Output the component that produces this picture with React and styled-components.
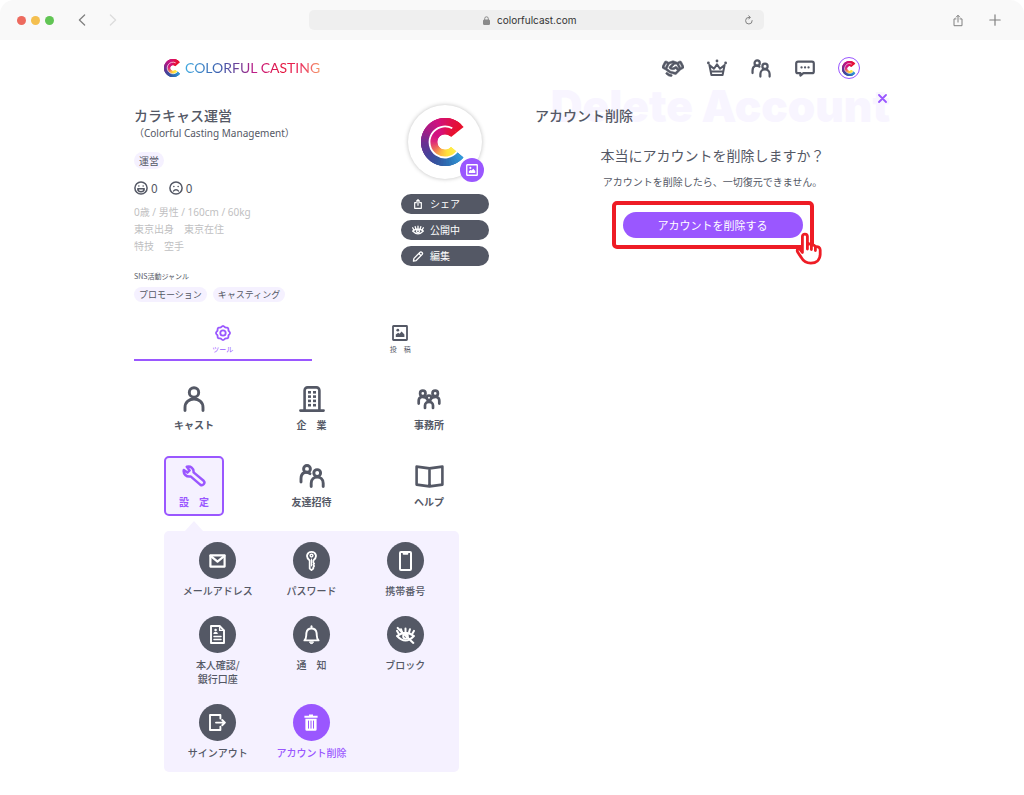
import React, { useState } from 'react';
import styled, { createGlobalStyle } from 'styled-components';
import { PiHandshakeBold } from 'react-icons/pi';

const INK = '#545865';
const PURPLE = '#9a57ff';
const PALE = '#f5f1ff';

const GlobalStyle = createGlobalStyle`
  * {
    box-sizing: border-box;
  }

  body {
    margin: 0;
    background: #fff;
    color: ${INK};
    font-family: 'Noto Sans CJK JP', sans-serif;
    font-size: 10px;
  }

  h1, h2, p, ul, li {
    margin: 0;
    padding: 0;
  }

  svg {
    display: block;
    flex-shrink: 0;
  }

  button, input {
    font-family: inherit;
    margin: 0;
    padding: 0;
    border: 0;
    background: none;
    color: inherit;
  }

  button {
    cursor: pointer;
  }

  a {
    color: inherit;
    text-decoration: none;
  }
`;

/* ---------- browser bar ---------- */

const BrowserBar = styled.div`
  display: flex;
  align-items: center;
  height: 40px;
  background: #f9f9f9;
  border-radius: 14px 14px 0 0;
`;

const BarLeft = styled.div`
  display: flex;
  align-items: center;
  flex: 0 0 309px;
  padding-left: 17px;
`;

const Lights = styled.div`
  display: flex;
  gap: 5px;
  margin-right: 18px;
`;

const Light = styled.span`
  width: 9px;
  height: 9px;
  border-radius: 50%;
  background: ${props => props.$color};
`;

const BarButton = styled.button`
  display: flex;
  align-items: center;
  justify-content: center;
  width: 20px;
  height: 20px;
  color: ${props => (props.$faint ? '#dcdcdc' : '#808080')};
`;

const ArrowButtons = styled.div`
  display: flex;
  gap: 11px;
`;

const AddressBar = styled.div`
  display: flex;
  align-items: center;
  flex: 1;
  height: 20px;
  padding-right: 5px;
  padding-left: 16px;
  border-radius: 5px;
  background: #efefef;
`;

const Address = styled.div`
  display: flex;
  align-items: center;
  justify-content: center;
  flex: 1;
  gap: 7px;
  color: #8a8a8a;

  input {
    width: 84px;
    height: 16px;
    color: #333;
    font-family: Inter, sans-serif;
    font-size: 10px;
    outline: none;
  }
`;

const BarRight = styled.div`
  display: flex;
  align-items: center;
  justify-content: flex-end;
  flex: 0 0 260px;
  gap: 17px;
  padding-right: 19px;
`;

/* ---------- site header ---------- */

const Header = styled.header`
  display: flex;
  align-items: center;
  justify-content: space-between;
  max-width: 756px;
  height: 56px;
  margin: 0 auto;
  padding: 0 30px;
`;

const Brand = styled.a`
  display: flex;
  align-items: center;
  gap: 3px;
`;

const BrandName = styled.span`
  font-family: Lato, sans-serif;
  font-size: 14px;
  line-height: 20px;
  white-space: nowrap;
  color: transparent;
  background: linear-gradient(90deg, #3fa9e0, #3b5fae 25%, #7a3a94 42%, #c41a86 52%, #e4143c 72%, #ea2a5c 85%, #f59a6a);
  -webkit-background-clip: text;
  background-clip: text;
`;

const Nav = styled.nav`
  display: flex;
  align-items: center;
  gap: 22px;

  a {
    display: flex;
    align-items: center;
    justify-content: center;
    width: 22px;
    height: 22px;
  }
`;

const NavAvatar = styled.span`
  display: flex;
  align-items: center;
  justify-content: center;
  width: 22px;
  height: 22px;
  border: 1px solid ${PURPLE};
  border-radius: 50%;
`;

/* ---------- columns ---------- */

const Main = styled.main`
  display: grid;
  grid-template-columns: 1fr 1fr;
  gap: 46px;
  max-width: 756px;
  margin: 0 auto;
  padding: 9px 0 24px;
`;

const Profile = styled.section`
  display: flex;
  align-items: flex-start;
  justify-content: space-between;
`;

const ProfileInfo = styled.div`
  min-width: 0;
`;

const Name = styled.h1`
  font-size: 14px;
  font-weight: 500;
  line-height: 20px;
`;

const SubName = styled.p`
  font-family: 'Noto Sans', 'Noto Sans CJK JP', sans-serif;
  font-size: 10px;
  line-height: 16px;
`;

const Tags = styled.ul`
  display: flex;
  gap: 6px;
  margin-top: ${props => props.$top};
  list-style: none;
`;

const Tag = styled.li`
  padding: 0 5px;
  border-radius: 9px;
  background: ${PALE};
  font-size: ${props => (props.$small ? '9px' : '10px')};
  line-height: ${props => (props.$small ? '15px' : '17px')};
`;

const Ratings = styled.div`
  display: flex;
  gap: 11px;
  margin-top: 11px;
`;

const Rating = styled.span`
  display: flex;
  align-items: center;
  gap: 3px;
  font-size: 12px;
  line-height: 16px;
`;

const Details = styled.p`
  margin-top: 8px;
  color: #bfbfc2;
  font-family: 'Noto Sans', 'Noto Sans CJK JP', sans-serif;
  font-size: 10px;
  line-height: 17px;
`;

const GenreTitle = styled.h2`
  margin-top: 15px;
  font-size: 7px;
  font-weight: 400;
  line-height: 13px;
`;

const ProfileSide = styled.div`
  display: flex;
  flex-direction: column;
  align-items: center;
  width: 88px;
`;

const Avatar = styled.div`
  position: relative;
  display: flex;
  align-items: center;
  justify-content: center;
  width: 74px;
  height: 74px;
  border-radius: 50%;
  background: #fff;
  box-shadow: 0 0 4px rgba(0, 0, 0, 0.25);
`;

const AvatarEdit = styled.button`
  position: absolute;
  right: -2px;
  bottom: -3px;
  display: flex;
  align-items: center;
  justify-content: center;
  width: 24px;
  height: 24px;
  border-radius: 50%;
  background: ${PURPLE};
  color: #fff;
`;

const Actions = styled.div`
  display: flex;
  flex-direction: column;
  gap: 6px;
  width: 100%;
  margin-top: 15px;
`;

const ActionButton = styled.button`
  display: flex;
  align-items: center;
  gap: 6px;
  height: 20px;
  padding-left: 11px;
  border-radius: 10px;
  background: ${INK};
  color: #fff;
  font-size: 10px;
  line-height: 20px;
`;

/* ---------- tabs ---------- */

const Tabs = styled.div`
  display: flex;
  margin-top: 14px;
`;

const Tab = styled.button`
  display: flex;
  flex: 1;
  flex-direction: column;
  align-items: center;
  gap: 3px;
  padding: 9px 0 5px;
  border-bottom: 2px solid ${props => (props.$active ? PURPLE : 'transparent')};
  color: ${props => (props.$active ? PURPLE : INK)};
  font-size: 7px;
  line-height: 10px;
`;

/* ---------- tool menu ---------- */

const Menu = styled.div`
  display: grid;
  grid-template-columns: repeat(3, 60px);
  justify-content: space-between;
  row-gap: 17px;
  margin: 18px 30px 0;
`;

const MenuButton = styled.button`
  display: flex;
  flex-direction: column;
  align-items: center;
  gap: 5px;
  height: 60px;
  padding-top: 4px;
  border: 2px solid ${props => (props.$active ? PURPLE : 'transparent')};
  border-radius: 5px;
  background: ${props => (props.$active ? PALE : 'none')};
  color: ${props => (props.$active ? PURPLE : INK)};
  font-size: 10px;
  font-weight: 700;
  line-height: 14px;
  white-space: nowrap;
`;

const MenuIcon = styled.span`
  display: flex;
  align-items: center;
  height: 28px;
`;

const SubMenu = styled.div`
  position: relative;
  display: grid;
  grid-template-columns: repeat(3, 1fr);
  align-items: start;
  row-gap: 18px;
  margin: 15px 30px 0;
  padding: 11px 7px 12px;
  border-radius: 5px;
  background: ${PALE};

  &::before {
    content: '';
    position: absolute;
    top: -10px;
    left: 21px;
    border: 9px solid transparent;
    border-top: 0;
    border-bottom: 10px solid ${PALE};
  }
`;

const SubButton = styled.button`
  display: flex;
  flex-direction: column;
  align-items: center;
  gap: 5px;
  color: ${props => (props.$active ? PURPLE : INK)};
  font-size: 10px;
  font-weight: 500;
  line-height: 14px;
  white-space: pre-line;
`;

const Disc = styled.span`
  display: flex;
  align-items: center;
  justify-content: center;
  width: 37px;
  height: 37px;
  border-radius: 50%;
  background: ${props => (props.$active ? PURPLE : INK)};
  color: #fff;
`;

/* ---------- delete account ---------- */

const DeletePanel = styled.section`
  position: relative;
  display: flex;
  flex-direction: column;
  align-items: center;
`;

const Watermark = styled.span`
  position: absolute;
  top: -21px;
  right: 0;
  z-index: -1;
  color: #f8f5ff;
  font-family: Inter, sans-serif;
  font-size: 44px;
  font-weight: 900;
  line-height: 44px;
  white-space: nowrap;
`;

const CloseButton = styled.button`
  position: absolute;
  top: -14px;
  right: 1px;
  display: flex;
  align-items: center;
  justify-content: center;
  width: 14px;
  height: 14px;
  color: ${PURPLE};
`;

const PanelTitle = styled.h2`
  align-self: stretch;
  font-size: 14px;
  font-weight: 500;
  line-height: 20px;
`;

const Question = styled.p`
  margin-top: 20px;
  font-size: 14px;
  line-height: 20px;
`;

const Note = styled.p`
  margin-top: 9px;
  font-size: 10px;
  line-height: 16px;
`;

const Highlight = styled.div`
  position: relative;
  margin-top: 11px;
  padding: 7px;
  border: 4px solid #ee1c25;
  border-radius: 5px;
`;

const DeleteButton = styled.button`
  display: block;
  width: 180px;
  height: 26px;
  border-radius: 13px;
  background: ${PURPLE};
  color: #fff;
  font-size: 11px;
  line-height: 26px;
`;

const Pointer = styled.span`
  position: absolute;
  right: -12px;
  bottom: -20px;
`;

/* ---------- drawings ---------- */

const OUTER_STOPS = ['#e8112d', '#de1150', '#cf1180', '#a81c86', '#6d2f92', '#4c4099', '#34559f', '#2c74b8', '#3398d8'];
const INNER_STOPS = ['#e8112d', '#e2114a', '#d6117a', '#d21283', '#dd2a7a', '#ee6a5c', '#fcb545', '#ffe23a', '#ffec4a'];

const mixStops = (stops, t) => {
  const pos = t * (stops.length - 1);
  const i = Math.min(Math.floor(pos), stops.length - 2);
  const channel = (hex, n) => parseInt(hex.slice(1 + n * 2, 3 + n * 2), 16);
  const mixed = [0, 1, 2].map(n =>
    Math.round(channel(stops[i], n) + (channel(stops[i + 1], n) - channel(stops[i], n)) * (pos - i))
  );
  return `rgb(${mixed.join(',')})`;
};

// angles run counter-clockwise from the upper right end of the C to the lower one
const arc = (r, from, to) => {
  const point = deg => {
    const rad = (deg * Math.PI) / 180;
    return `${(24 + r * Math.cos(rad)).toFixed(2)} ${(24 - r * Math.sin(rad)).toFixed(2)}`;
  };
  return `M${point(from)}A${r} ${r} 0 ${to - from > 180 ? 1 : 0} 0 ${point(to)}`;
};

const START = 39;
const END = 320;
const STEPS = 36;

function Mark({ size }) {
  const step = (END - START) / STEPS;
  return (
    <svg width={size} height={size} viewBox="0 0 48 48" fill="none" aria-hidden="true">
      {[...Array(STEPS)].map((_, i) => {
        // each slice runs on to the end, so that the next one covers it without a seam
        const from = START + i * step;
        const t = i / (STEPS - 1);
        return (
          <g key={i}>
            <path d={arc(19.5, from, Math.min(from + step * 3, END))} stroke={mixStops(OUTER_STOPS, t)} strokeWidth="9" />
            <path d={arc(11.5, from, Math.min(from + step * 3, END))} stroke={mixStops(INNER_STOPS, t)} strokeWidth="7.4" />
          </g>
        );
      })}
      <path d={arc(15.5, 62, END + 2)} stroke="#fff" strokeWidth="1.8" />
    </svg>
  );
}

function Icon({ w, h = w, box, sw = 2, children }) {
  return (
    <svg
      width={w}
      height={h}
      viewBox={box}
      fill="none"
      stroke="currentColor"
      strokeWidth={sw}
      strokeLinecap="round"
      strokeLinejoin="round"
      aria-hidden="true"
    >
      {children}
    </svg>
  );
}

const Crown = () => (
  <Icon w={20} box="0 0 20 20" sw={2}>
    <path d="M2.4 7 4.4 17h11.2L17.600 7 13 10.800 10 6.400 7 10.800z" />
    <path d="M4.6 13.6h10.800" />
    <g fill="currentColor" stroke="none">
      <circle cx="1.4" cy="5" r="1.4" />
      <circle cx="10" cy="3" r="1.4" />
      <circle cx="18.6" cy="5" r="1.4" />
    </g>
  </Icon>
);

const Pair = ({ w, h }) => (
  <Icon w={w} h={h} box="0 0 26 24" sw={2.9}>
    <circle cx="8" cy="4.9" r="3.400" />
    <path d="M2 18v-3.200c0-7 5.600-7.600 9-5.200" />
    <circle cx="18.200" cy="9" r="3.400" />
    <path d="M12.200 22.500v-3.200c0-8.200 12-8.200 12 0v3.200" />
  </Icon>
);

const Chat = () => (
  <Icon w={20} h={17} box="0 0 20 17" sw={2.2}>
    <path d="M3 1.6h14a1.8 1.8 0 0 1 1.8 1.8v8a1.8 1.8 0 0 1-1.8 1.8H8.4l-3 2.4v-2.4H3a1.8 1.8 0 0 1-1.8-1.8v-8A1.8 1.8 0 0 1 3 1.6z" />
    <path d="M6.5 7.4h.1M10 7.4h.1M13.5 7.4h.1" />
  </Icon>
);

const Smile = () => (
  <Icon w={14} box="0 0 14 14" sw={1.5}>
    <circle cx="7" cy="7" r="6.1" />
    <path d="M4.8 5h.1M9.1 5h.1" />
    <path d="M3.800 7.800h6.400c0 4-6.400 4-6.400 0z" />
  </Icon>
);

const Frown = () => (
  <Icon w={14} box="0 0 14 14" sw={1.5}>
    <circle cx="7" cy="7" r="6.1" />
    <path d="M4.8 5.4h.1M9.1 5.4h.1" />
    <path d="M4.6 10c1-1.8 3.8-1.8 4.8 0" />
  </Icon>
);

const Picture = ({ size }) => (
  <Icon w={size} box="0 0 16 16" sw={1.8}>
    <rect x="1" y="1" width="14" height="14" rx="0.5" />
    <path d="M3.8 12V9.6l2.4-1.8 1.4 1 2-2.4 2.8 3V12z" fill="currentColor" stroke="none" />
    <circle cx="5.8" cy="5.2" r="1.4" fill="currentColor" stroke="none" />
  </Icon>
);

const Share = ({ w = 10, h = 10, sw = 1.4 }) => (
  <Icon w={w} h={h} box="0 0 10 12" sw={sw}>
    <path d="M3 4.4H1v6.8h8V4.4H7M5 7.6V1M3.2 2.6 5 .8l1.8 1.8" />
  </Icon>
);

const EyeShape = () => (
  <>
    <path d="M1 8.5Q9 2.5 17 8.5 9 17 1 8.5z" />
    <circle cx="9" cy="8.8" r="2.2" />
    <path d="M2.6 6.4 1 3.6M5.6 4.8 4.8 2M9 4.2V1.4M12.4 4.8l.8-2.8M15.4 6.4 17 3.6" />
  </>
);

const Eye = () => (
  <Icon w={12} h={10} box="0 0 18 14" sw={2}>
    <EyeShape />
  </Icon>
);

const Pencil = () => (
  <Icon w={12} h={11} box="0 0 12 12" sw={1.4}>
    <path d="M1 11l.6-3L8 1.6a1.5 1.5 0 0 1 2.4 2.4L4 10.4zM7 2.8l2.2 2.2" />
  </Icon>
);

const gearPath = () => {
  const pts = [...Array(64)].map((_, i) => {
    const a = (i / 64) * Math.PI * 2;
    const r = 6.5 + 0.5 * Math.cos(a * 8);
    return `${(8 + r * Math.cos(a)).toFixed(2)} ${(8 + r * Math.sin(a)).toFixed(2)}`;
  });
  return `M${pts.join('L')}z`;
};

const Gear = () => (
  <Icon w={16} box="0 0 16 16" sw={1.8}>
    <path d={gearPath()} />
    <circle cx="8" cy="8" r="2.7" />
  </Icon>
);

const Person = () => (
  <Icon w={22} h={26} box="0 0 22 26" sw={2.9}>
    <circle cx="11" cy="6.4" r="4.7" />
    <path d="M2 24.500v-3c0-11.400 18-11.400 18 0v3" />
  </Icon>
);

const Building = () => (
  <Icon w={26} h={26} box="0 0 26 26" sw={2.6}>
    <path d="M1.4 24.600h23.200M5.600 24V4.400a3 3 0 0 1 3-3h8.800a3 3 0 0 1 3 3V24" />
    <g fill="currentColor" stroke="none">
      {[5, 9.3, 13.6, 17.9].map(y => (
        <React.Fragment key={y}>
          <rect x="9" y={y} width="3" height="2.6" />
          <rect x="14" y={y} width="3" height="2.6" />
        </React.Fragment>
      ))}
    </g>
  </Icon>
);

const Group = () => (
  <Icon w={24} h={21} box="0 0 24 21" sw={2.7}>
    <circle cx="5.800" cy="4.400" r="2.700" />
    <circle cx="18.200" cy="4.400" r="2.700" />
    <path d="M1.700 14.600v-2.800C1.700 8 5 7 8.400 8.600M22.300 14.600v-2.800c0-3.800-3.300-4.800-6.700-3.200" />
    <circle cx="12" cy="8.800" r="2.300" />
    <path d="M8 19v-2.400c0-5 8-5 8 0V19" />
  </Icon>
);

const Wrench = () => (
  <Icon w={24} h={22} box="0 0 24 22" sw={2.5}>
    <path d="M4.800 1.800C8.600.8 12 3.200 11.600 7.400L21.600 15.800c2.200 2.400-.8 5.600-3.400 3.800L8.600 11.400C4.400 12.200 1 9 1.800 5l3.600 2.600 2.200-2.200z" />
  </Icon>
);

const Book = () => (
  <Icon w={29} h={23} box="0 0 29 23" sw={2.6}>
    <path d="M14.5 3.400 1.600 1.600v18l12.900 1.800 12.900-1.800v-18zM14.500 3.400v18" />
  </Icon>
);

const Mail = () => (
  <Icon w={17} h={14} box="0 0 17 14" sw={2.2}>
    <path d="M1.400 1.400h14.200v11.200H1.400z" />
    <path d="M1.600 1.800l6.900 5.800 6.900-5.800" />
  </Icon>
);

const Key = () => (
  <Icon w={11} h={20} box="0 0 11 20" sw={1.8}>
    <path d="M3.700 9.400C-1 6 1.200.9 5.500.9s6.500 5.100 1.800 8.500v2.200l.8 1-.8 1.200.8 1.200-.8 1.400v1.200l-1.800 1.600-1.800-1.600z" />
    <circle cx="5.500" cy="4.600" r="1.400" strokeWidth="1.400" />
    <path d="M5.500 8v7" strokeWidth="1" />
  </Icon>
);

const Phone = () => (
  <Icon w={13} h={20} box="0 0 13 20" sw={2}>
    <rect x="1" y="1" width="11" height="18" rx="1" />
    <path d="M4.600 2.800h3.800" />
  </Icon>
);

const Document = () => (
  <Icon w={15} h={19} box="0 0 15 19" sw={1.9}>
    <path d="M1 1h8.600L14 5.400V18H1z" />
    <path d="M9.600 1v4.400H14" strokeWidth="1.300" />
    <path d="M4 11.400h7M4 14.600h7" strokeWidth="1.500" />
    <circle cx="5.600" cy="5" r="1.300" fill="currentColor" stroke="none" />
    <path d="M3.400 9c0-3 4.400-3 4.400 0z" fill="currentColor" stroke="none" />
  </Icon>
);

const Bell = () => (
  <Icon w={17} h={20} box="0 0 17 20" sw={1.9}>
    <path d="M1.400 15.400c2.400-2 1.600-4.600 2-7.400.8-6 9.400-6 10.200 0 .4 2.800-.4 5.400 2 7.400z" />
    <path d="M8.500 3V1.200" />
    <path d="M6.600 17.200c.6 2 3.200 2 3.800 0z" fill="currentColor" strokeWidth="1" />
  </Icon>
);

const EyeOff = () => (
  <Icon w={19} h={18} box="0 -1 18 17" sw={1.9}>
    <EyeShape />
    <path d="M1.600.8 16.400 15" />
  </Icon>
);

const SignOut = () => (
  <Icon w={17} h={17} box="0 0 17 17" sw={1.9}>
    <path d="M11.400 4.600V1H1v15h10.400v-3.400M7 8.600h8.800M13.200 6l2.700 2.600-2.700 2.600" />
  </Icon>
);

const Trash = () => (
  <svg width="14" height="17" viewBox="0 0 14 17" fill="none" aria-hidden="true">
    <path d="M5 1.800V.6h4v1.200h4.600v2H.4v-2zM1.400 4.800h11.200V15.400a1.400 1.400 0 0 1-1.400 1.400H2.800a1.400 1.400 0 0 1-1.400-1.400z" fill="currentColor" />
    <path d="M4.500 6.600v8M7 6.600v8M9.500 6.600v8" stroke={PURPLE} strokeWidth="1" />
  </svg>
);

const Hand = () => (
  <svg width="27" height="33" viewBox="0 0 27 33" fill="#fff" stroke="#ee1c25" strokeWidth="2.8" strokeLinecap="round" strokeLinejoin="round" aria-hidden="true">
    <path d="M7.400 20.500V4.600a2.500 2.500 0 0 1 5 0v8c1.400-1.200 3.200-.8 4 .8 1.600-.8 3.200-.2 4 1.400 2.800-.6 4.800.6 4.800 3.200V22c0 6-4.200 9.200-9.400 9.200-4.400 0-7.600-2.200-9.600-5.800L2.600 20c-1.200-2.600 1-4 2.800-2.200z" />
    <path d="M12.400 12.600V17M16.400 13.600v4M20.400 15v3.600" fill="none" />
  </svg>
);

const MENU = [
  { id: 'cast', label: 'キャスト', icon: <Person /> },
  { id: 'company', label: '企　業', icon: <Building /> },
  { id: 'office', label: '事務所', icon: <Group /> },
  { id: 'settings', label: '設　定', icon: <Wrench /> },
  { id: 'invite', label: '友達招待', icon: <Pair w={26} h={24} /> },
  { id: 'help', label: 'ヘルプ', icon: <Book /> }
];

const SETTINGS = [
  { id: 'mail', label: 'メールアドレス', icon: <Mail /> },
  { id: 'password', label: 'パスワード', icon: <Key /> },
  { id: 'phone', label: '携帯番号', icon: <Phone /> },
  { id: 'identity', label: '本人確認/\n銀行口座', icon: <Document /> },
  { id: 'notice', label: '通　知', icon: <Bell /> },
  { id: 'block', label: 'ブロック', icon: <EyeOff /> },
  { id: 'signout', label: 'サインアウト', icon: <SignOut /> },
  { id: 'delete', label: 'アカウント削除', icon: <Trash /> }
];

function App() {
  const [tab, setTab] = useState('tools');
  const [menu, setMenu] = useState('settings');
  const [setting, setSetting] = useState('delete');

  return (
    <>
      <GlobalStyle />
      <BrowserBar>
        <BarLeft>
          <Lights>
            <Light $color="#ed6a5e" />
            <Light $color="#f4bf4f" />
            <Light $color="#61c554" />
          </Lights>
          <ArrowButtons>
            <BarButton aria-label="Back">
              <Icon w={8} h={12} box="0 0 8 12" sw={1.3}><path d="M6.600 1 1.400 6l5.200 5" /></Icon>
            </BarButton>
            <BarButton $faint aria-label="Forward">
              <Icon w={8} h={12} box="0 0 8 12" sw={1.3}><path d="M1.400 1l5.200 5-5.200 5" /></Icon>
            </BarButton>
          </ArrowButtons>
        </BarLeft>
        <AddressBar>
          <Address>
            <svg width="7" height="9" viewBox="0 0 7 9" fill="none" stroke="currentColor" aria-hidden="true">
              <rect x="0.500" y="4" width="6" height="4.500" rx="0.500" fill="currentColor" />
              <path d="M1.700 4V2.600a1.800 1.800 0 0 1 3.600 0V4" />
            </svg>
            <input aria-label="Address" defaultValue="colorfulcast.com" />
          </Address>
          <BarButton aria-label="Reload">
            <Icon w={8} h={10} box="0 0 8 10" sw={1}>
              <path d="M7.200 5.600A3.300 3.300 0 1 1 4 2.400h1M3.800.8l1.400 1.600-1.400 1.600" />
            </Icon>
          </BarButton>
        </AddressBar>
        <BarRight>
          <BarButton aria-label="Share page"><Share w={10} h={13} sw={1} /></BarButton>
          <BarButton aria-label="New tab">
            <Icon w={12} box="0 0 12 12" sw={1.2}><path d="M6 .8v10.400M.8 6h10.400" /></Icon>
          </BarButton>
        </BarRight>
      </BrowserBar>

      <Header>
        <Brand href="#">
          <Mark size={18} />
          <BrandName>COLORFUL CASTING</BrandName>
        </Brand>
        <Nav>
          <a href="#offers" aria-label="オファー"><PiHandshakeBold size={22} stroke="currentColor" strokeWidth={6} /></a>
          <a href="#ranking" aria-label="ランキング"><Crown /></a>
          <a href="#friends" aria-label="友達"><Pair w={20} h={19} /></a>
          <a href="#messages" aria-label="メッセージ"><Chat /></a>
          <a href="#me" aria-label="マイページ"><NavAvatar><Mark size={15} /></NavAvatar></a>
        </Nav>
      </Header>

      <Main>
        <div>
          <Profile>
            <ProfileInfo>
              <Name>カラキャス運営</Name>
              <SubName>（Colorful Casting Management）</SubName>
              <Tags $top="11px">
                <Tag>運営</Tag>
              </Tags>
              <Ratings>
                <Rating><Smile />0</Rating>
                <Rating><Frown />0</Rating>
              </Ratings>
              <Details>
                0歳 / 男性 / 160cm / 60kg
                <br />
                東京出身　東京在住
                <br />
                特技　空手
              </Details>
              <GenreTitle>SNS活動ジャンル</GenreTitle>
              <Tags $top="4px">
                <Tag $small>プロモーション</Tag>
                <Tag $small>キャスティング</Tag>
              </Tags>
            </ProfileInfo>
            <ProfileSide>
              <Avatar>
                <Mark size={48} />
                <AvatarEdit aria-label="画像を変更"><Picture size={12} /></AvatarEdit>
              </Avatar>
              <Actions>
                <ActionButton><Share w={12} h={10} />シェア</ActionButton>
                <ActionButton><Eye />公開中</ActionButton>
                <ActionButton><Pencil />編集</ActionButton>
              </Actions>
            </ProfileSide>
          </Profile>

          <Tabs role="tablist">
            <Tab role="tab" aria-selected={tab === 'tools'} $active={tab === 'tools'} onClick={() => setTab('tools')}>
              <Gear />
              ツール
            </Tab>
            <Tab role="tab" aria-selected={tab === 'posts'} $active={tab === 'posts'} onClick={() => setTab('posts')}>
              <Picture size={16} />
              投　稿
            </Tab>
          </Tabs>

          <Menu>
            {MENU.map(item => (
              <MenuButton key={item.id} $active={menu === item.id} onClick={() => setMenu(item.id)}>
                <MenuIcon>{item.icon}</MenuIcon>
                {item.label}
              </MenuButton>
            ))}
          </Menu>

          <SubMenu>
            {SETTINGS.map(item => (
              <SubButton key={item.id} $active={setting === item.id} onClick={() => setSetting(item.id)}>
                <Disc $active={setting === item.id}>{item.icon}</Disc>
                {item.label}
              </SubButton>
            ))}
          </SubMenu>
        </div>

        <DeletePanel>
          <Watermark aria-hidden="true">Delete Account</Watermark>
          <PanelTitle>アカウント削除</PanelTitle>
          <CloseButton aria-label="閉じる">
            <Icon w={9} box="0 0 9 9" sw={1.8}><path d="M1 1l7 7M8 1 1 8" /></Icon>
          </CloseButton>
          <Question>本当にアカウントを削除しますか？</Question>
          <Note>アカウントを削除したら、一切復元できません。</Note>
          <Highlight>
            <DeleteButton>アカウントを削除する</DeleteButton>
            <Pointer><Hand /></Pointer>
          </Highlight>
        </DeletePanel>
      </Main>
    </>
  );
}

export default App;
